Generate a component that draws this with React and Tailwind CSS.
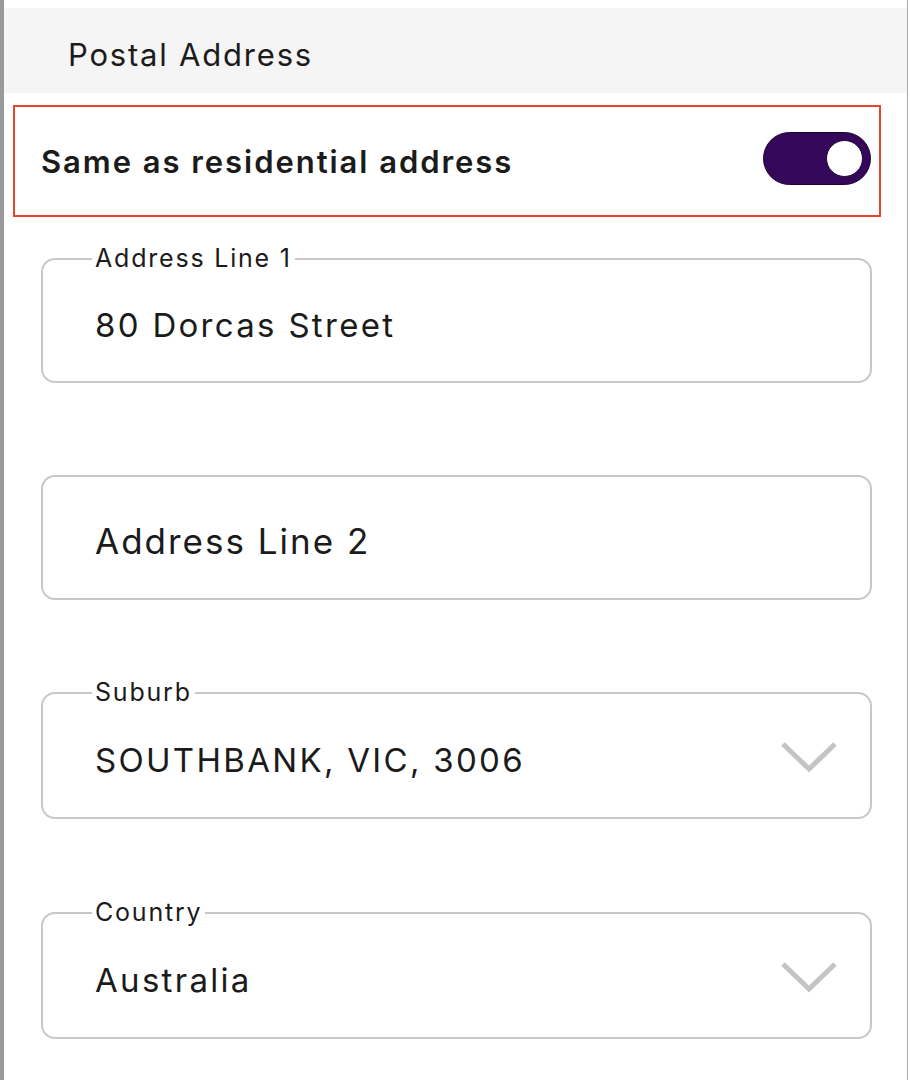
import React from "react";

const font = { fontFamily: "Inter, 'Noto Sans', sans-serif" };

function Chevron() {
  return (
    <svg width="60" height="40" viewBox="0 0 60 40" className="shrink-0">
      <polyline points="4,6 30,31 56,6" fill="none" stroke="#c4c4c4" strokeWidth="5" />
    </svg>
  );
}

function Field({ label, value, placeholder, select, tall, extra }) {
  return (
    <div
      className={
        "relative ml-[37px] w-[831px] border-2 border-[#c8c8c8] rounded-[14px] pl-[52px] pr-[31px] flex items-center justify-between " +
        (tall ? "h-[127px] " : "h-[125px] ") +
        (extra ? "mt-[1px]" : "")
      }
    >
      {label && (
        <span className="absolute left-[49px] top-[-16px] bg-white px-[3px] text-[25px] leading-[28px] text-[#1b1b1b] tracking-[1.8px]">
          {label}
        </span>
      )}
      {value ? (
        <span className="mt-[9px] text-[33px] leading-[40px] text-[#1b1b1b] tracking-[2.3px]">{value}</span>
      ) : (
        <span className="mt-[7px] text-[35px] leading-[40px] text-[#1b1b1b] tracking-[2px]">{placeholder}</span>
      )}
      {select && (
        <div className="mt-[4px]">
          <Chevron />
        </div>
      )}
    </div>
  );
}

export default function App() {
  return (
    <div className="w-[910px] h-[1080px] bg-white flex overflow-hidden" style={font}>
      <div className="w-[4px] bg-[#9a9a9a] shrink-0" />
      <div className="w-[903px] flex flex-col pt-[8px]">
        <div className="h-[85px] bg-[#f5f5f5] flex items-center pl-[64px] pt-[8px]">
          <span className="text-[31px] leading-[36px] text-[#1b1b1b] tracking-[1.8px]">Postal Address</span>
        </div>
        <div className="mt-[12px] ml-[9px] w-[868px] h-[112px] border-2 border-[#e8452c] flex items-center justify-between pl-[26px] pr-[8px]">
          <span className="text-[31px] leading-[36px] font-semibold text-[#1b1b1b] tracking-[1.95px] mt-[2px]">
            Same as residential address
          </span>
          <div className="w-[108px] h-[53px] rounded-full bg-[#35075a] border border-[#1a0330] flex items-center justify-end pr-[7px] mb-[6px]">
            <div className="w-[37px] h-[37px] rounded-full bg-white border border-[#1a0330]" />
          </div>
        </div>
        <div className="flex flex-col gap-[92px] mt-[41px]">
          <Field label="Address Line 1" value="80 Dorcas Street" />
          <Field placeholder="Address Line 2" />
          <Field label="Suburb" value="SOUTHBANK, VIC, 3006" select tall />
          <Field label="Country" value="Australia" select tall extra />
        </div>
      </div>
      <div className="w-[1px] bg-[#aaaaaa] shrink-0" />
    </div>
  );
}
